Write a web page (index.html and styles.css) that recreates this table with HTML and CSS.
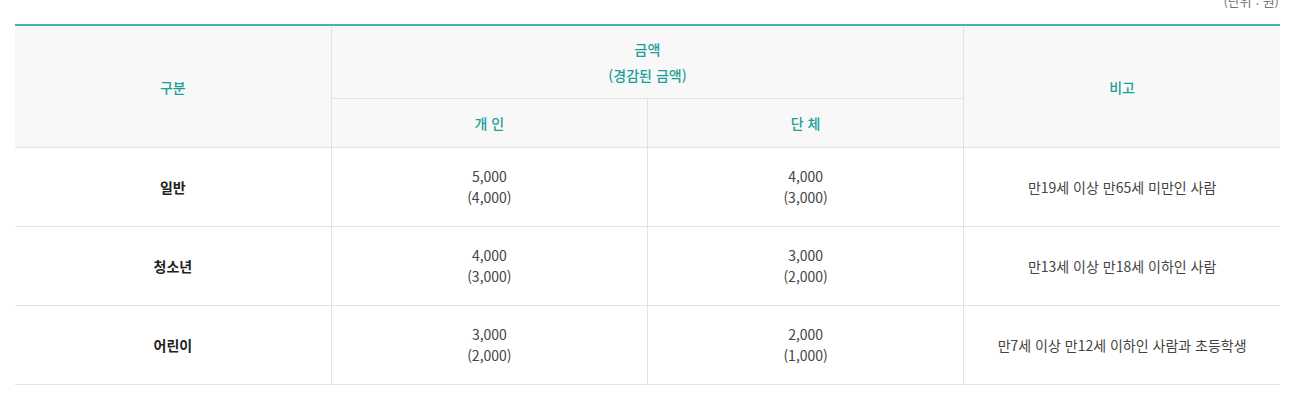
FILE: index.html
```html
<!DOCTYPE html>
<html lang="ko">
<head>
<meta charset="utf-8">
<link rel="stylesheet" href="styles.css">
</head>
<body>
<div class="wrap">
  <p class="unit">(단위 : 원)</p>
  <table class="fee">
    <colgroup>
      <col class="c"><col class="c"><col class="c"><col class="c">
    </colgroup>
    <thead>
      <tr class="h1">
        <th rowspan="2" class="first">구분</th>
        <th colspan="2">금액<br>(경감된 금액)</th>
        <th rowspan="2" class="last">비고</th>
      </tr>
      <tr class="h2">
        <th>개 인</th>
        <th>단 체</th>
      </tr>
    </thead>
    <tbody>
      <tr>
        <th class="first">일반</th>
        <td>5,000<br>(4,000)</td>
        <td>4,000<br>(3,000)</td>
        <td class="last">만19세 이상 만65세 미만인 사람</td>
      </tr>
      <tr>
        <th class="first">청소년</th>
        <td>4,000<br>(3,000)</td>
        <td>3,000<br>(2,000)</td>
        <td class="last">만13세 이상 만18세 이하인 사람</td>
      </tr>
      <tr>
        <th class="first">어린이</th>
        <td>3,000<br>(2,000)</td>
        <td>2,000<br>(1,000)</td>
        <td class="last">만7세 이상 만12세 이하인 사람과 초등학생</td>
      </tr>
    </tbody>
  </table>
</div>
</body>
</html>
```

FILE: styles.css
```css
html, body {
  margin: 0;
  padding: 0;
  background: #fff;
}
body {
  font-family: "Noto Sans CJK KR", "Noto Sans", sans-serif;
  font-size: 14px;
  color: #333;
}
.wrap {
  padding: 0 20px 0 15px;
}
.unit {
  margin: -9px 0 13px;
  height: 20px;
  line-height: 20px;
  text-align: right;
  font-size: 13px;
  color: #777;
  padding-right: 1px;
}
.fee {
  width: 100%;
  border-collapse: collapse;
  table-layout: fixed;
  border-top: 2px solid #4cb3aa;
}
.fee col.c {
  width: 25%;
}
.fee th, .fee td {
  border: 1px solid #e2e2e2;
  text-align: center;
  vertical-align: middle;
  padding: 0;
}
.fee .first { border-left: 0; }
.fee .last { border-right: 0; }
.fee thead th {
  background: #f8f8f8;
  color: #1b9f99;
  font-weight: 500;
  line-height: 26px;
}
.fee thead tr:first-child th { border-top: 0; }
.fee .h1 th { height: 72px; }
.fee .h2 th { height: 48px; }
.fee tbody th, .fee tbody td {
  height: 78px;
  line-height: 21px;
}
.fee tbody th {
  font-weight: 700;
  color: #222;
}
.fee tbody td {
  color: #444;
}
```
